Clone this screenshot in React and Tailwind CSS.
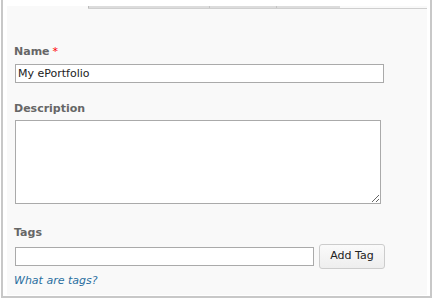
export default function App() {
  const font = { fontFamily: '"DejaVu Sans", Verdana, sans-serif' };
  return (
    <div className="w-[434px] h-[303px] bg-white relative" style={font}>
      <div className="absolute left-[1px] top-0 w-[431px] h-[298px] border-l-2 border-r-2 border-b-2 border-[#c8c8c8] bg-white">
        <div className="ml-[4px] mr-[3px] mt-[6px] h-[289px] bg-[#f9f9f9] flex flex-col">
          <div className="flex pl-[81px] h-[3px] items-start">
            <div className="flex h-[3px] border-b border-[#cfcfcf]">
              <div className="w-[121px] h-[2px] bg-[#dcdcdc] border-l border-[#bbbbbb]" />
              <div className="w-[67px] h-[2px] bg-[#dcdcdc] border-l border-[#c4c4c4]" />
              <div className="w-[64px] h-[2px] bg-[#dcdcdc] border-l border-[#c4c4c4]" />
            </div>
            <div className="flex-1 h-[3px] border-b border-[#cfcfcf]" />
          </div>
          <div className="pl-[7px] pt-[36px] flex flex-col">
            <div className="text-[11px] font-bold text-[#666666] leading-[14px] flex items-center">
              Name<span className="text-[#ff0000] ml-[3px] font-normal">*</span>
            </div>
            <input
              className="mt-[5px] ml-[1px] w-[369px] h-[19px] border border-[#aaaaaa] bg-white text-[11px] text-[#222] px-[2px] outline-none"
              style={font}
              defaultValue="My ePortfolio"
            />
            <div className="mt-[19px] text-[11px] font-bold text-[#666666] leading-[14px]">Description</div>
            <textarea
              className="mt-[4px] ml-[1px] w-[366px] h-[84px] border border-[#aaaaaa] bg-white outline-none"
              style={font}
            />
            <div className="mt-[22px] text-[11px] font-bold text-[#666666] leading-[14px]">Tags</div>
            <div className="mt-[4px] ml-[1px] flex items-center">
              <input className="w-[299px] h-[19px] border border-[#aaaaaa] bg-white outline-none" />
              <button
                className="ml-[5px] w-[66px] h-[25px] rounded-[3px] border border-[#cccccc] bg-gradient-to-b from-[#fafafa] to-[#eeeeee] text-[11px] text-[#222]"
                style={font}
              >
                Add Tag
              </button>
            </div>
            <div className="mt-[5px] text-[11px] italic text-[#2a6fa0] leading-[14px]">What are tags?</div>
          </div>
        </div>
      </div>
    </div>
  );
}
